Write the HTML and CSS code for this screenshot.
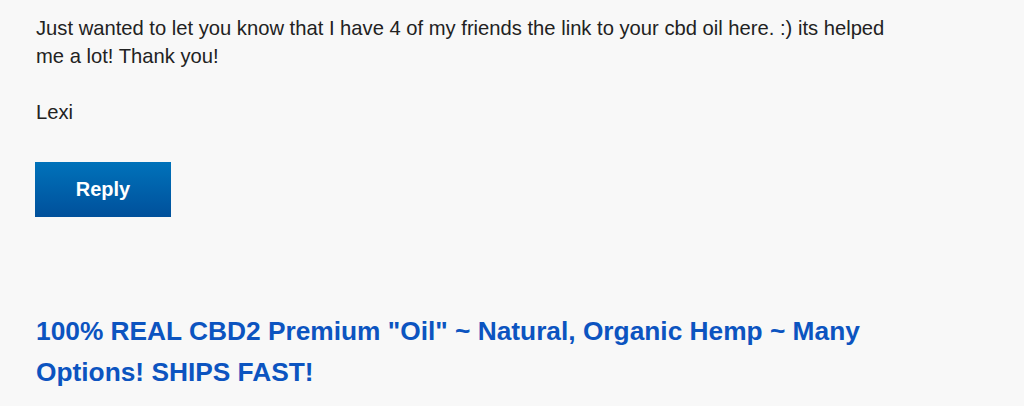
FILE: index.html
```html
<!DOCTYPE html>
<html lang="en">
<head>
    <meta charset="UTF-8">
    <meta name="viewport" content="width=device-width, initial-scale=1.0">
    <title>Comment</title>
    <link rel="stylesheet" href="styles.css">
</head>
<body>
    <div class="comment">
        <p>Just wanted to let you know that I have 4 of my friends the link to your cbd oil here. :) its helped me a lot! Thank you!</p>
        <p>Lexi</p>
        <button class="reply-btn">Reply</button>
    </div>
    <h2 class="promo-title">100% REAL CBD2 Premium "Oil" ~ Natural, Organic Hemp ~ Many Options! SHIPS FAST!</h2>
</body>
</html>
```

FILE: styles.css
```css
body {
    font-family: 'Liberation Sans', Arial, sans-serif;
    margin: 0;
    padding: 0 36px;
    background-color: #f8f8f8;
    color: #222;
}
.comment {
    max-width: 870px;
    padding-top: 14px;
}
.comment p {
    font-size: 20.2px;
    line-height: 28px;
    margin: 0 0 28px;
}
.reply-btn {
    display: block;
    width: 136px;
    height: 55px;
    margin: 36px 0 0 -1px;
    background: linear-gradient(to bottom, #0072ba, #00509b);
    color: white;
    border: none;
    font-family: inherit;
    font-size: 20px;
    font-weight: bold;
    cursor: pointer;
}
.promo-title {
    max-width: 870px;
    margin: 94px 0 0;
    font-size: 26.3px;
    line-height: 41px;
    color: #0c54c0;
}
```
